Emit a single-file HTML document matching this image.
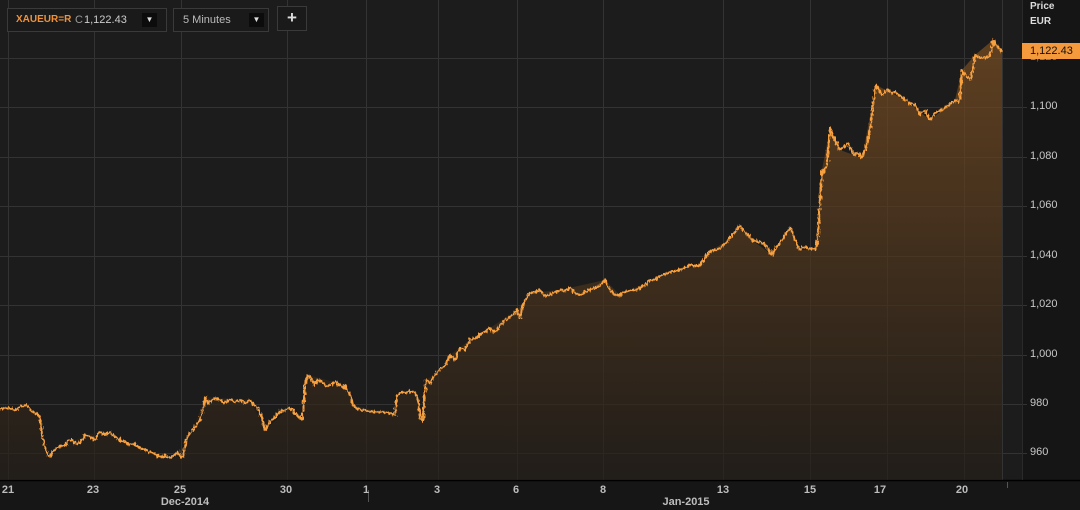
<!DOCTYPE html>
<html><head><meta charset="utf-8"><style>
html,body{margin:0;padding:0;background:#151515;width:1080px;height:510px;overflow:hidden;font-family:"Liberation Sans",sans-serif}
.box{position:absolute;top:8px;height:24px;border:1px solid #3a3a3a;background:#1a1a1a;box-sizing:border-box;font-size:11px;color:#bbb;line-height:22px}
.dd{position:absolute;top:4px;width:15px;height:14px;background:#0c0c0c;color:#ddd;font-size:8px;line-height:14px;text-align:center}
.pl{position:absolute;left:1030px;font-size:11px;color:#c8c8c8}
.xl{position:absolute;top:484px;font-size:11px;font-weight:bold;color:#bdbdbd;transform:translateX(-50%)}
</style></head><body>
<svg width="1080" height="510" style="position:absolute;left:0;top:0">
<defs><linearGradient id="g" x1="0" y1="0" x2="0" y2="1">
<stop offset="0" stop-color="#7a4e22" stop-opacity=".95"/><stop offset="1" stop-color="#241e18" stop-opacity=".9"/></linearGradient>
<filter id="j" x="-5%" y="-5%" width="110%" height="110%"><feTurbulence type="fractalNoise" baseFrequency="0.6 0.25" numOctaves="2" seed="3" result="n"/><feDisplacementMap in="SourceGraphic" in2="n" scale="5" xChannelSelector="R" yChannelSelector="G"/></filter>
</defs>
<rect x="0" y="0" width="1022" height="480" fill="#1c1c1c"/>
<rect x="0" y="481" width="1080" height="29" fill="#161616"/>
<g stroke="#333" stroke-width="1">
<line x1="0" y1="58.5" x2="1027" y2="58.5"/><line x1="0" y1="107.5" x2="1027" y2="107.5"/><line x1="0" y1="157.5" x2="1027" y2="157.5"/><line x1="0" y1="206.5" x2="1027" y2="206.5"/><line x1="0" y1="256.5" x2="1027" y2="256.5"/><line x1="0" y1="305.5" x2="1027" y2="305.5"/><line x1="0" y1="355.5" x2="1027" y2="355.5"/><line x1="0" y1="404.5" x2="1027" y2="404.5"/><line x1="0" y1="453.5" x2="1027" y2="453.5"/>
<line x1="8.5" y1="0" x2="8.5" y2="480"/><line x1="94.5" y1="0" x2="94.5" y2="480"/><line x1="181.5" y1="0" x2="181.5" y2="480"/><line x1="287.5" y1="0" x2="287.5" y2="480"/><line x1="366.5" y1="0" x2="366.5" y2="480"/><line x1="438.5" y1="0" x2="438.5" y2="480"/><line x1="517.5" y1="0" x2="517.5" y2="480"/><line x1="603.5" y1="0" x2="603.5" y2="480"/><line x1="723.5" y1="0" x2="723.5" y2="480"/><line x1="810.5" y1="0" x2="810.5" y2="480"/><line x1="887.5" y1="0" x2="887.5" y2="480"/><line x1="964.5" y1="0" x2="964.5" y2="480"/><line x1="1002.5" y1="0" x2="1002.5" y2="480"/>
</g>
<line x1="0" y1="480.5" x2="1080" y2="480.5" stroke="#000" stroke-width="1.5"/>
<path d="M0,409 L8,408 15,410 27,405 40,417 46,450 50,458 65,445 85,435 100,432 110,432 130,445 150,452 170,458 183,457 193,430 205,397 250,400 265,430 290,408 302,420 308,375 345,385 353,405 395,415 397,395 415,393 423,422 426,380 440,370 450,355 470,340 490,328 517,310 530,293 560,290 605,280 620,295 660,276 700,265 712,250 728,240 740,225 752,240 772,255 790,228 800,250 815,250 822,170 830,128 840,150 862,158 876,85 905,100 930,120 955,100 962,70 975,55 993,40 1002,52 L1002,480 L0,480 Z" fill="url(#g)" opacity=".75"/>
<path filter="url(#j)" d="M0,409 L8,408 15,410 21,406 27,405 30,409 33,412 37,414 40,417 42,435 44,443 46,450 48,455 50,458 52,452 55,450 58,447 62,446 65,445 68,441 72,440 76,444 80,443 83,438 85,435 90,437 95,440 98,434 100,432 105,435 110,432 115,437 120,440 125,442 130,445 135,444 140,448 145,450 150,452 155,454 160,457 165,456 170,458 174,455 178,452 181,457 183,457 185,447 186,440 190,433 193,430 197,424 200,420 203,410 205,397 208,403 210,402 215,398 220,400 225,403 230,399 235,402 240,400 245,403 250,400 254,405 258,408 262,418 265,430 268,426 270,422 274,418 280,412 285,410 290,408 294,412 297,415 302,420 304,400 305,385 308,375 312,380 315,385 318,380 322,382 326,386 330,385 335,382 340,385 344,388 345,385 348,392 350,395 353,405 356,408 360,410 365,410 370,412 380,412 388,413 395,415 396,405 397,395 402,392 405,393 410,391 415,393 418,398 420,418 423,422 424,400 426,380 430,383 433,378 435,375 438,371 440,370 445,365 448,360 450,355 455,360 458,352 460,348 465,350 468,344 470,340 475,338 480,335 485,332 490,328 493,332 497,330 501,324 505,320 509,318 512,315 515,312 517,310 520,318 522,308 525,300 528,296 530,293 535,292 540,290 545,296 550,295 555,292 560,290 565,291 570,288 575,293 580,295 585,292 590,290 595,288 600,285 603,282 605,280 608,287 610,290 615,295 620,295 625,292 630,290 635,290 640,288 645,285 650,280 655,280 660,276 665,274 670,272 675,271 680,270 685,268 690,265 695,266 700,265 705,258 708,253 712,250 716,250 720,248 724,245 728,240 731,236 735,232 738,228 740,225 743,230 745,232 749,236 752,240 756,241 760,242 764,244 768,248 770,252 772,255 775,249 778,245 782,240 785,235 788,230 790,228 793,234 795,240 798,246 800,250 804,247 808,248 812,249 815,250 817,245 818,235 820,200 822,170 824,172 827,165 828,150 830,128 832,135 835,140 838,146 840,150 844,147 848,143 851,150 855,155 858,153 862,158 865,150 868,140 870,130 872,115 873,105 875,90 876,85 879,90 882,95 885,92 888,90 891,93 895,92 900,96 905,100 910,103 915,105 918,110 920,115 923,112 925,110 928,116 930,120 933,116 935,113 940,111 945,108 950,104 955,100 958,102 960,100 961,85 962,70 966,76 970,80 973,68 975,55 978,57 985,58 988,57 990,55 992,47 993,40 995,44 998,47 1000,50 1002,52" fill="none" stroke="#f7a040" stroke-width="2.2" stroke-linejoin="round"/>
<line x1="1022.5" y1="0" x2="1022.5" y2="480" stroke="#2a2a2a"/>
<line x1="368.5" y1="490" x2="368.5" y2="502" stroke="#555"/>
<line x1="1007.5" y1="482" x2="1007.5" y2="488" stroke="#555"/>
</svg>
<div class="box" style="left:7px;width:160px"><span style="position:absolute;left:8px;color:#f0923a;font-weight:bold;font-size:10px">XAUEUR=R</span><span style="position:absolute;left:67px;color:#999">C</span><span style="position:absolute;left:76px;color:#ccc">1,122.43</span><div class="dd" style="left:134px">▼</div></div>
<div class="box" style="left:173px;width:96px"><span style="position:absolute;left:9px">5 Minutes</span><div class="dd" style="left:75px">▼</div></div>
<div class="box" style="left:277px;top:6px;width:30px;height:25px;text-align:center;color:#ddd;font-size:17px;font-weight:bold;line-height:22px">+</div>
<div class="pl" style="top:1px;font-size:10px;font-weight:bold;color:#ddd">Price</div>
<div class="pl" style="top:16px;font-size:10px;font-weight:bold;color:#ddd">EUR</div>
<div class="pl" style="top:51px;color:#888">1,120</div>
<div style="position:absolute;left:1022px;top:43px;width:58px;height:16px;background:#f59a3c;color:#111;font-size:11px;line-height:16px;padding-left:8px;box-sizing:border-box">1,122.43</div>
<div class="pl" style="top:100px">1,100</div><div class="pl" style="top:150px">1,080</div><div class="pl" style="top:199px">1,060</div><div class="pl" style="top:249px">1,040</div><div class="pl" style="top:298px">1,020</div><div class="pl" style="top:348px">1,000</div><div class="pl" style="top:397px">980</div><div class="pl" style="top:446px">960</div>
<div class="xl" style="left:8px">21</div><div class="xl" style="left:93px">23</div><div class="xl" style="left:180px">25</div><div class="xl" style="left:286px">30</div><div class="xl" style="left:366px">1</div><div class="xl" style="left:437px">3</div><div class="xl" style="left:516px">6</div><div class="xl" style="left:603px">8</div><div class="xl" style="left:723px">13</div><div class="xl" style="left:810px">15</div><div class="xl" style="left:880px">17</div><div class="xl" style="left:962px">20</div>
<div class="xl" style="left:185px;top:496px">Dec-2014</div><div class="xl" style="left:686px;top:496px">Jan-2015</div>
</body></html>
